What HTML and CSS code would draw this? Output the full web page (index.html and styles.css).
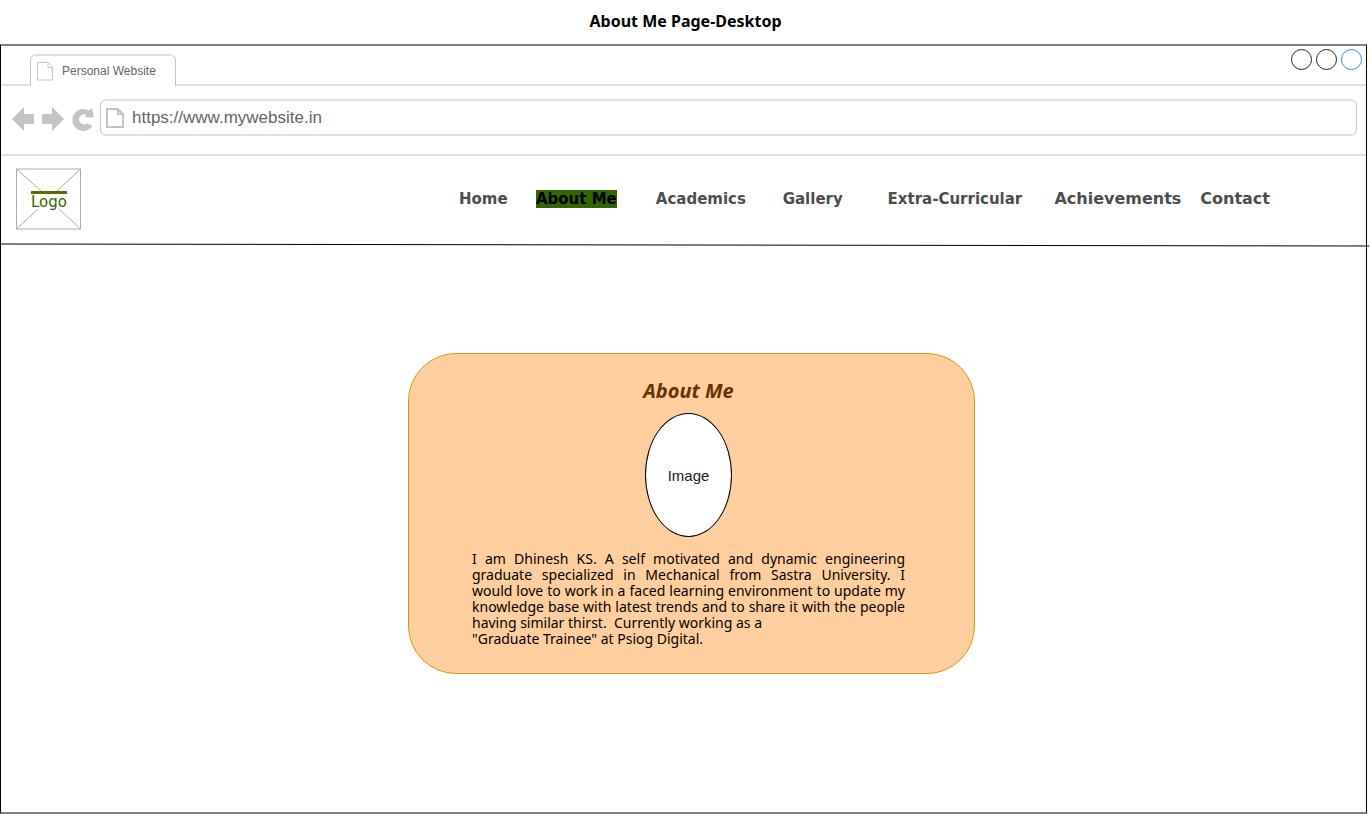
FILE: index.html
```html
<!DOCTYPE html>
<html lang="en">
<head>
<meta charset="utf-8">
<meta name="viewport" content="width=device-width, initial-scale=1">
<title>About Me Page-Desktop</title>
<link rel="stylesheet" href="styles.css">
</head>
<body>
<h1 class="page-title">About Me Page-Desktop</h1>
<div class="browser">
  <div class="tab-strip">
    <div class="tab">
      <svg class="tab-icon" viewBox="0 0 16 20" aria-hidden="true"><path d="M.5 1.500H11l4.500 5V19H.5zM11 1.500v5h4.500"/></svg>
      <span>Personal Website</span>
    </div>
    <div class="window-buttons">
      <button class="window-button" type="button" aria-label="Minimize"></button>
      <button class="window-button" type="button" aria-label="Maximize"></button>
      <button class="window-button window-button-close" type="button" aria-label="Close"></button>
    </div>
  </div>
  <div class="toolbar">
    <div class="tools">
      <button class="tool" type="button" aria-label="Back"><svg width="22" height="24" viewBox="0 0 22 24"><path d="M0 12 12 0v7h10v10H12v7z"/></svg></button>
      <button class="tool" type="button" aria-label="Forward"><svg width="22" height="24" viewBox="0 0 22 24"><path d="M22 12 10 0v7H0v10h10v7z"/></svg></button>
      <button class="tool" type="button" aria-label="Reload"><svg width="22" height="24" viewBox="0 0 22 24"><path d="M17 3.500 20 1 22 10.500 12.500 10 14.500 8A5 5 0 1 0 15 16.500L20.500 19A11 11 0 1 1 17 3.500z"/></svg></button>
    </div>
    <label class="address">
      <svg class="address-icon" viewBox="0 0 18 20" aria-hidden="true"><path d="M1 1h11l5 5v13H1zM12 1v5h5"/></svg>
      <input class="address-input" type="text" value="https://www.mywebsite.in" aria-label="Address">
    </label>
  </div>
  <header class="site-header">
    <a class="logo" href="#">
      <svg class="logo-frame" viewBox="0 0 66 62" aria-hidden="true"><path d="M.5 1h64v60H.5zM.5 1 25 23M64.500 1 41 23M.5 61 22 41M64.500 61 43 41"/></svg>
      <span class="logo-text">Logo</span>
    </a>
    <nav class="nav">
      <a href="#">Home</a>
      <a class="active" href="#">About Me</a>
      <a href="#">Academics</a>
      <a href="#">Gallery</a>
      <a href="#">Extra-Curricular</a>
      <a class="large" href="#">Achievements</a>
      <a class="large" href="#">Contact</a>
    </nav>
  </header>
  <svg class="rule" viewBox="0 0 1368 4" preserveAspectRatio="none" aria-hidden="true"><path d="M0 1 1368 3"/></svg>
  <main class="content">
    <section class="card">
      <h2 class="card-title">About Me</h2>
      <div class="portrait">Image</div>
      <p class="bio">
        <span class="full">I am Dhinesh KS. A self motivated and dynamic engineering</span>
        <span class="full">graduate specialized in Mechanical from Sastra University. I</span>
        <span class="full">would love to work in a faced learning environment to update my</span>
        <span class="full">knowledge base with latest trends and to share it with the people</span>
        <span>having similar thirst.&nbsp; Currently working as a</span>
        <span>"Graduate Trainee" at Psiog Digital.</span>
      </p>
    </section>
  </main>
</div>
</body>
</html>
```
FILE: styles.css
```css
* { box-sizing: border-box; }
body {
  margin: 0;
  min-height: 100vh;
  display: flex;
  flex-direction: column;
  background: #fff;
  color: #000;
  font-family: "Liberation Sans", Arial, sans-serif;
}
button { padding: 0; border: 0; background: none; }
a { color: inherit; text-decoration: none; }
.page-title {
  margin: 0;
  height: 44px;
  text-align: center;
  font: bold 16px/42px "Comic Sans MS", "Noto Sans", sans-serif;
}
.browser {
  flex: 1;
  display: flex;
  flex-direction: column;
  margin-right: 4px;
  border: solid #000;
  border-width: 2px 1px;
  border-top-color: #808080;
  border-bottom-color: #808080;
}
.tab-strip {
  display: flex;
  justify-content: space-between;
  height: 40px;
  border-bottom: 2px solid #e0e0e0;
}
.tab {
  display: flex;
  align-items: center;
  gap: 9px;
  width: 146px;
  height: 32px;
  margin: 8px 0 0 29px;
  padding-left: 6px;
  border: 1px solid #c4c4c4;
  border-top: 2px solid #e0e0e0;
  border-bottom: 0;
  border-radius: 6px 6px 0 0;
  background: #fff;
  color: #666;
  font-size: 12px;
}
.tab-icon, .address-icon { fill: none; stroke: #c4c4c4; }
.tab-icon { width: 16px; height: 20px; }
.window-buttons { display: flex; gap: 4px; padding: 3px 4px 0 0; }
.window-button {
  width: 21px;
  height: 21px;
  border: 1px solid #222;
  border-radius: 50%;
}
.window-button-close { border-color: #2a8fdc; }
.toolbar {
  display: flex;
  align-items: flex-start;
  gap: 6px;
  height: 70px;
  padding: 13px 9px 0 11px;
  border-bottom: 2px solid #e0e0e0;
}
.tools { display: flex; gap: 8px; padding-top: 8px; }
.tool { height: 24px; }
.tool svg { display: block; fill: #c4c4c4; }
.address {
  flex: 1;
  display: flex;
  align-items: center;
  gap: 8px;
  height: 37px;
  padding-left: 5px;
  border: 1px solid #c4c4c4;
  border-top: 2px solid #e0e0e0;
  border-bottom: 2px solid #e0e0e0;
  border-radius: 6px;
}
.address-icon { width: 18px; height: 20px; stroke-width: 2; }
.address-input {
  flex: 1;
  padding: 0;
  border: 0;
  outline: 0;
  background: none;
  color: #666;
  font: 17px "Liberation Sans", Arial, sans-serif;
}
.site-header {
  display: flex;
  align-items: center;
  height: 87px;
  padding: 0 96px 2px 15px;
}
.logo {
  display: grid;
  place-items: center;
  font-family: "DejaVu Sans", sans-serif;
}
.logo > * { grid-area: 1 / 1; }
.logo-frame { width: 66px; height: 62px; fill: none; stroke: #aaa; }
.logo-text {
  margin-top: 3px;
  border-top: 3px solid #660;
  color: #360;
  font-size: 15px;
  line-height: 16px;
}
.nav {
  display: grid;
  grid-template-columns: 77fr 120fr 127fr 105fr 167fr 146fr 69fr;
  align-items: center;
  justify-items: start;
  width: 811px;
  margin-left: auto;
  padding-top: 1px;
  color: #4d4d4d;
  font: bold 15px/18px "DejaVu Sans", Verdana, sans-serif;
}
.nav .large { font-size: 16px; }
.nav .active { background: #360; color: #000; }
.rule {
  display: block;
  width: calc(100% + 3px);
  height: 4px;
  overflow: visible;
  fill: none;
  stroke: #000;
}
.content { flex: 1; padding: 106px 0 100px 16px; }
.card {
  width: 567px;
  max-width: 100%;
  margin: 0 auto;
  padding: 23px 69px 26px 63px;
  border: 1px solid #d79b00;
  border-radius: 48px;
  background: #ffce9f;
  font-family: "Comic Sans MS", "Noto Sans", sans-serif;
}
.card-title {
  margin: 0 0 8px;
  color: #630;
  text-align: center;
  font-size: 20px;
  font-style: italic;
  line-height: 28px;
}
.portrait {
  display: grid;
  place-items: center;
  width: 87px;
  height: 124px;
  margin: 0 auto 14px;
  border: 1px solid #000;
  border-radius: 50%;
  background: #fff;
  color: #222;
  font: 15px "Liberation Sans", Arial, sans-serif;
}
.bio {
  margin: 0;
  font-size: 14px;
  line-height: 16px;
}
.bio span { display: block; }
.bio .full { text-align-last: justify; white-space: nowrap; }
```
